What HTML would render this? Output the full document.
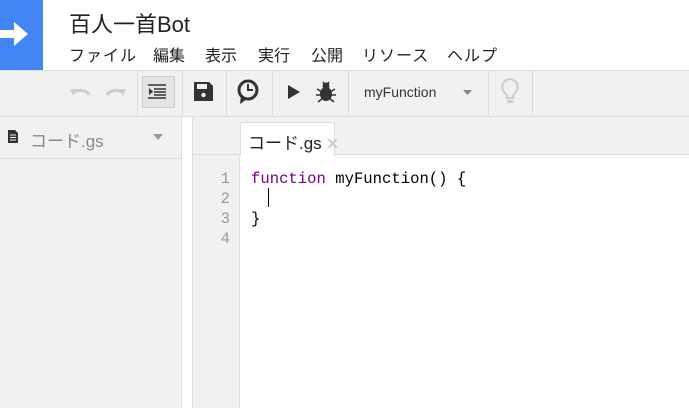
<html><head><style>
body{margin:0;width:689px;height:408px;position:relative;background:#fff;font-family:"Liberation Sans","Noto Sans CJK JP",sans-serif;overflow:hidden}
.a{position:absolute}
.sep{position:absolute;top:71px;width:1px;height:45px;background:#dcdcdc}
.code{font-family:"Liberation Mono",monospace;font-size:15.6px;line-height:20px}
.m{position:absolute;top:42px;font-size:16px;color:#222}
</style></head><body>
<div class="a" style="left:0;top:0;width:43px;height:70px;background:#4285f4"></div>
<svg class="a" style="left:0;top:20px" width="32" height="28"><path d="M0 10h14V2l14 12-14 12v-8H0z" fill="#fff"/></svg>
<div class="a" style="left:69px;top:7px;font-size:22px;color:#222">百人一首Bot</div>
<span class="m" style="left:69px;letter-spacing:1px">ファイル</span>
<span class="m" style="left:153px">編集</span>
<span class="m" style="left:205px">表示</span>
<span class="m" style="left:258px">実行</span>
<span class="m" style="left:311px">公開</span>
<span class="m" style="left:362px;letter-spacing:1px">リソース</span>
<span class="m" style="left:447px;letter-spacing:1px">ヘルプ</span>
<div class="a" style="left:0;top:70px;width:689px;height:47px;background:#f1f1f1;border-top:1px solid #ddd;border-bottom:1px solid #ddd;box-sizing:border-box"></div>
<div class="sep" style="left:137px"></div><div class="sep" style="left:182px"></div><div class="sep" style="left:226px"></div><div class="sep" style="left:272px"></div><div class="sep" style="left:348px"></div><div class="sep" style="left:488px"></div><div class="sep" style="left:532px"></div>
<svg class="a" style="left:70px;top:84px" width="56" height="16"><path d="M3 9a9 6 0 0 1 16 2" stroke="#ccc" stroke-width="3" fill="none"/><path d="M0 5l7 0-4 7z" fill="#ccc"/><path d="M53 9a9 6 0 0 0-16 2" stroke="#ccc" stroke-width="3" fill="none"/><path d="M56 5l-7 0 4 7z" fill="#ccc"/></svg>
<div class="a" style="left:142px;top:76px;width:33px;height:32px;background:#e4e4e4;border:1px solid #ccc;box-sizing:border-box;border-radius:2px"></div>
<svg class="a" style="left:148px;top:84px" width="20" height="16"><path d="M0 1h18M6 5h12M6 8h12M6 11h12M0 14h18" stroke="#333" stroke-width="1.5"/><path d="M1 4l4 3.5-4 3.5z" fill="#333"/></svg>
<svg class="a" style="left:194px;top:82px" width="19" height="19"><path d="M0 0h15l4 4v15H0z" fill="#333"/><rect x="3" y="2" width="10" height="5" fill="#f1f1f1"/><circle cx="9.5" cy="13" r="2.2" fill="#f1f1f1"/></svg>
<svg class="a" style="left:236px;top:78px" width="26" height="28"><circle cx="12" cy="12" r="9" stroke="#333" stroke-width="3" fill="none"/><path d="M12 6v6h5" stroke="#333" stroke-width="2" fill="none"/><path d="M5 17l-1 9 7-5z" fill="#333"/></svg>
<svg class="a" style="left:287px;top:84px" width="14" height="16"><path d="M1 1l12 7-12 7z" fill="#333"/></svg>
<svg class="a" style="left:315px;top:81px" width="22" height="22"><ellipse cx="11" cy="13" rx="6" ry="7" fill="#333"/><circle cx="11" cy="5" r="3.5" fill="#333"/><path d="M2 8l5 3M20 8l-5 3M1 14h6M21 14h-6M3 21l5-4M19 21l-5-4M8 1l2 3M14 1l-2 3" stroke="#333" stroke-width="1.6"/></svg>
<div class="a" style="left:364px;top:84px;font-size:14px;color:#333">myFunction</div>
<svg class="a" style="left:463px;top:90px" width="9" height="5"><path d="M0 0h9L4.5 5z" fill="#888"/></svg>
<svg class="a" style="left:500px;top:77px" width="20" height="30"><path d="M10 2a8 8 0 0 0-5 14c1 1 2 3 2 5h6c0-2 1-4 2-5a8 8 0 0 0-5-14z" stroke="#ccc" stroke-width="2" fill="none"/><rect x="7" y="23" width="6" height="3" fill="#ccc"/></svg>
<div class="a" style="left:0;top:117px;width:182px;height:291px;background:#f1f1f1;border-right:1px solid #ddd;box-sizing:border-box"></div>
<div class="a" style="left:0;top:158px;width:181px;height:1px;background:#ddd"></div>
<svg class="a" style="left:7px;top:129px" width="12" height="15"><path d="M1 1h7l3 3v10H1z" fill="#333"/><path d="M3 6h6M3 8.5h6M3 11h6" stroke="#f1f1f1"/></svg>
<div class="a" style="left:30px;top:127px;font-size:17px;color:#888">コード.gs</div>
<svg class="a" style="left:153px;top:134px" width="10" height="6"><path d="M0 0h10L5 6z" fill="#999"/></svg>
<div class="a" style="left:192px;top:117px;width:497px;height:38px;background:#f1f1f1;border-left:1px solid #ddd;border-bottom:1px solid #ddd;box-sizing:border-box"></div>
<div class="a" style="left:240px;top:122px;width:95px;height:34px;background:#fff;border:1px solid #ddd;border-bottom:none;box-sizing:border-box;border-radius:2px 2px 0 0"></div>
<div class="a" style="left:248px;top:129px;font-size:17px;color:#222">コード.gs <span style="color:#ccc;font-size:15px;font-weight:bold">✕</span></div>
<div class="a" style="left:192px;top:155px;width:48px;height:253px;background:#f1f1f1;border-left:1px solid #ddd;border-right:1px solid #ddd;box-sizing:border-box"></div>
<div class="a code" style="left:210px;top:169px;width:20px;text-align:right;color:#999">1<br>2<br>3<br>4</div>
<div class="a code" style="left:251px;top:169px;color:#000"><span style="color:#708">function</span> myFunction() {<br>&nbsp;<br>}</div>
<div class="a" style="left:268px;top:188px;width:1px;height:19px;background:#000"></div>
</body></html>
